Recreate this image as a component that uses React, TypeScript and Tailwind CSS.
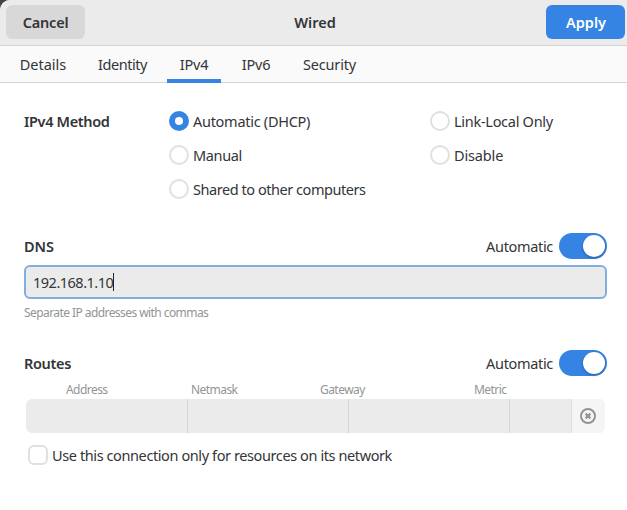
import type { ReactNode } from 'react';

function Tab({ children, width, active = false }: { children: ReactNode; width: string; active?: boolean }) {
  return (
    <button className={`${width} flex h-[37px] justify-center border-b-4 pt-2 ${active ? 'border-[#3584e4]' : 'border-transparent'}`}>
      {children}
    </button>
  );
}

function Radio({ children, checked = false }: { children: ReactNode; checked?: boolean }) {
  return (
    <label className="flex h-5 items-center gap-1">
      <span className={`flex size-5 shrink-0 items-center justify-center rounded-full ${checked ? 'bg-[#3584e4]' : 'border-2 border-[#e0e0e0] bg-white'}`}>
        {checked && <span className="size-2 rounded-full bg-white" />}
      </span>
      {children}
    </label>
  );
}

function Switch() {
  return (
    <span className="flex h-[26px] w-12 items-center justify-end rounded-full bg-[#3584e4] pr-0.5">
      <span className="size-[22px] rounded-full bg-white shadow-[0_1px_3px_rgba(0,0,0,0.3)]" />
    </span>
  );
}

function SectionHead({ title }: { title: ReactNode }) {
  return (
    <div className="flex h-[26px] items-center">
      {title}
      <span className="ml-auto flex items-center gap-1.5">
        <Text className="tracking-[-0.33px]">Automatic</Text>
        <Switch />
      </span>
    </div>
  );
}

function Text({ children, className = '' }: { children: string; className?: string }) {
  return <span className={`text-[14.5px] leading-5 ${className}`}>{children}</span>;
}

export default function App() {
  return (
    <div className="h-[510px] w-[627px] overflow-hidden bg-[#444] font-['Noto_Sans',sans-serif] whitespace-nowrap text-[#333537]">
      <div className="h-full overflow-hidden rounded-tl-[10px] bg-white">
        <header className="grid h-[46px] grid-cols-[79px_1fr_79px] border-b border-[#d5d5d5] bg-[#ebebeb] pt-[5px] pr-[2px] pl-[6px]">
          <button className="flex h-[34px] items-center justify-center rounded-md bg-[#d8d8d8]">
            <Text className="font-semibold tracking-[-0.2px]">Cancel</Text>
          </button>
          <h1 className="flex h-[34px] items-center justify-center pr-px">
            <Text className="font-semibold">Wired</Text>
          </h1>
          <button className="flex h-[34px] items-center justify-center rounded-md bg-[#3584e4] pl-px text-white">
            <Text className="font-semibold">Apply</Text>
          </button>
        </header>
        <nav className="h-[37px] border-b border-[#d5d5d5] bg-[#fafafa]">
          <div className="flex gap-2 pl-2">
            <Tab width="w-[70px]"><Text>Details</Text></Tab>
            <Tab width="w-[73px]"><Text className="tracking-[-0.45px]">Identity</Text></Tab>
            <Tab width="w-[54px]" active><Text className="tracking-[-0.2px]">IPv4</Text></Tab>
            <Tab width="w-[54px]"><Text className="tracking-[-0.2px]">IPv6</Text></Tab>
            <Tab width="w-[77px]"><Text className="tracking-[-0.15px]">Security</Text></Tab>
          </div>
        </nav>
        <main className="pr-5 pl-6">
          <section className="grid grid-cols-[145px_261px_1fr] gap-y-[14px] pt-7">
            <Text className="font-semibold tracking-[-0.35px]">IPv4 Method</Text>
            <Radio checked><Text className="tracking-[-0.28px]">Automatic (DHCP)</Text></Radio>
            <Radio><Text className="tracking-[-0.28px]">Link-Local Only</Text></Radio>
            <span />
            <Radio><Text className="tracking-[-0.35px]">Manual</Text></Radio>
            <Radio><Text className="tracking-[-0.15px]">Disable</Text></Radio>
            <span />
            <Radio><Text className="tracking-[-0.45px]">Shared to other computers</Text></Radio>
          </section>
          <section className="mt-[34px]">
            <SectionHead title={<Text className="font-semibold">DNS</Text>} />
            <div className="mt-1.5 flex h-[34px] items-center rounded-md border-2 border-[#81addf] bg-[#ebebeb] pl-[7px]">
              <Text className="tracking-[-0.5px]">192.168.1.10</Text>
              <span className="h-[18px] w-px bg-[#222]" />
            </div>
            <p className="mt-1.5 text-[12px] leading-4 tracking-[-0.57px] text-[#929595]">Separate IP addresses with commas</p>
          </section>
          <section className="mt-[29px]">
            <SectionHead title={<Text className="font-semibold tracking-[-0.35px]">Routes</Text>} />
            <div className="mt-1.5 grid h-4 grid-cols-[125px_129px_154px_1fr] pl-[42px] text-[12px] leading-4 tracking-[-0.55px] text-[#929595]">
              <span>Address</span>
              <span>Netmask</span>
              <span>Gateway</span>
              <span>Metric</span>
            </div>
            <div className="mt-px mr-0.5 ml-0.5 grid h-[34px] grid-cols-[162px_161px_161px_62px_33px] overflow-hidden rounded-md bg-[#ebebeb]">
              <span className="border-r border-[#d5d5d5]" />
              <span className="border-r border-[#d5d5d5]" />
              <span className="border-r border-[#d5d5d5]" />
              <span className="border-r border-[#dfdfdf]" />
              <button className="flex items-center justify-center bg-[#f5f5f5] pr-px">
                <svg width="16" height="16" viewBox="0 0 16 16" fill="none" stroke="#929595">
                  <circle cx="8" cy="8" r="7" strokeWidth="2" />
                  <path d="M5.6 5.6l4.8 4.8M10.4 5.6l-4.8 4.8" strokeWidth="2.2" />
                </svg>
              </button>
            </div>
            <label className="mt-3 ml-1 flex h-5 items-center gap-1">
              <span className="size-5 rounded-md border-2 border-[#e0e0e0] bg-white" />
              <Text className="tracking-[-0.4px]">Use this connection only for resources on its network</Text>
            </label>
          </section>
        </main>
      </div>
    </div>
  );
}
